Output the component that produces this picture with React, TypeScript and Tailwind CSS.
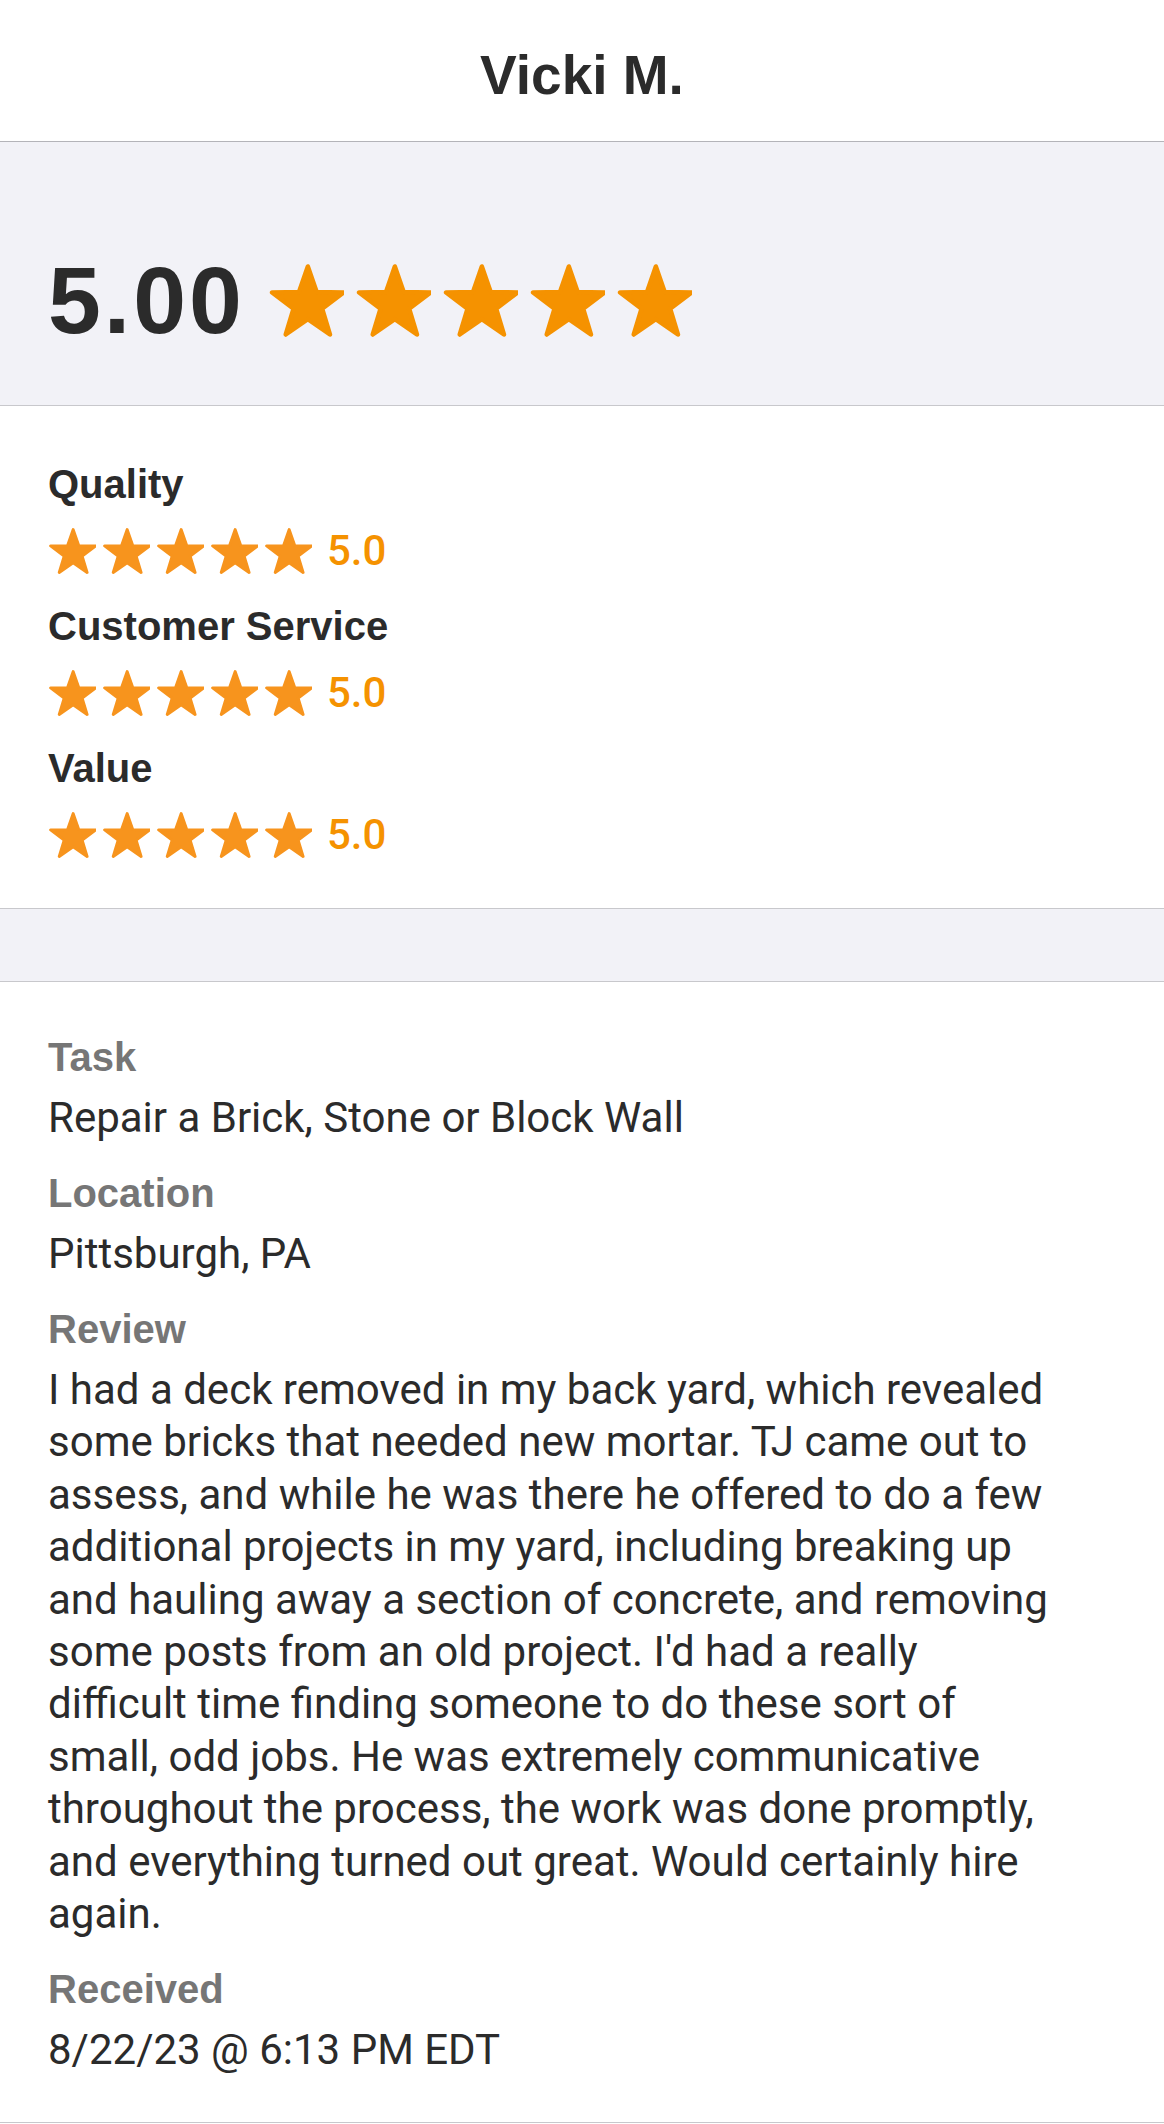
const STAR_PATH =
  "M50 0 L61.76 33.82 L97.55 34.55 L69.02 56.18 L79.39 90.45 L50 70 L20.61 90.45 L30.98 56.18 L2.45 34.55 L38.24 33.82 Z";

// lines broken where the original app breaks them
const REVIEW_LINES = [
  "I had a deck removed in my back yard, which revealed",
  "some bricks that needed new mortar. TJ came out to",
  "assess, and while he was there he offered to do a few",
  "additional projects in my yard, including breaking up",
  "and hauling away a section of concrete, and removing",
  "some posts from an old project. I'd had a really",
  "difficult time finding someone to do these sort of",
  "small, odd jobs. He was extremely communicative",
  "throughout the process, the work was done promptly,",
  "and everything turned out great. Would certainly hire",
  "again.",
];

const Star = ({ className, color }: { className: string; color: string }) => (
  <svg viewBox="-3 -3 101.1 96.45" className={className}>
    <path d={STAR_PATH} fill={color} stroke={color} strokeWidth={6} strokeLinejoin="round" />
  </svg>
);

const RatingRow = ({ label, score }: { label: string; score: string }) => (
  <div className="flex flex-col">
    <p className="text-[40px] font-bold leading-[40px] text-[#2b2b2b]">{label}</p>
    <div className="mt-[24px] flex h-[46px] items-center">
      <div className="flex gap-[6px]">
        {[0, 1, 2, 3, 4].map((i) => (
          <Star key={i} className="h-[46px] w-[48px]" color="#f7941d" />
        ))}
      </div>
      <span className="ml-[15px] font-['Roboto',sans-serif] text-[42px] font-medium leading-[46px] text-[#f59200]">
        {score}
      </span>
    </div>
  </div>
);

const Field = ({ label, children }: { label: string; children: React.ReactNode }) => (
  <div className="flex flex-col gap-[9px]">
    <p className="text-[40px] font-bold leading-[52.4px] text-[#767676]">{label}</p>
    <div className="font-['Roboto',sans-serif] text-[42px] leading-[52.4px] text-[#2b2b2b]">{children}</div>
  </div>
);

export default function App() {
  return (
    <div className="min-h-screen w-[1164px] bg-white font-['Liberation_Sans',Arial,sans-serif]">
      <header className="flex h-[142px] items-center justify-center border-b border-[#b4b4b9] pt-[9px]">
        <h1 className="text-[55px] font-bold text-[#2b2b2b]">Vicki M.</h1>
      </header>

      <section className="h-[264px] border-b border-[#c8c8cc] bg-[#f2f2f7] px-12 pt-[118px]">
        <div className="flex h-[80px] items-center">
          <span className="text-[95px] font-bold leading-[80px] tracking-[3px] text-[#2b2b2b]">5.00</span>
          <div className="ml-[23px] flex gap-[11px]">
            {[0, 1, 2, 3, 4].map((i) => (
              <Star key={i} className="h-[73px] w-[76px]" color="#f59200" />
            ))}
          </div>
        </div>
      </section>

      <section className="flex flex-col gap-[32px] border-b border-[#c8c8cc] px-12 pb-[50px] pt-[58px]">
        <RatingRow label="Quality" score="5.0" />
        <RatingRow label="Customer Service" score="5.0" />
        <RatingRow label="Value" score="5.0" />
      </section>

      <div className="h-[73px] border-b border-[#c8c8cc] bg-[#f2f2f7]" />

      <section className="flex flex-col gap-[22px] border-b border-[#c8c8cc] pb-[46px] pl-12 pr-4 pt-[49px]">
        <Field label="Task">Repair a Brick, Stone or Block Wall</Field>
        <Field label="Location">Pittsburgh, PA</Field>
        <Field label="Review">
          {REVIEW_LINES.map((line, i) => (
            <p key={i}>{line}</p>
          ))}
        </Field>
        <Field label="Received">8/22/23 @ 6:13 PM EDT</Field>
      </section>
    </div>
  );
}
